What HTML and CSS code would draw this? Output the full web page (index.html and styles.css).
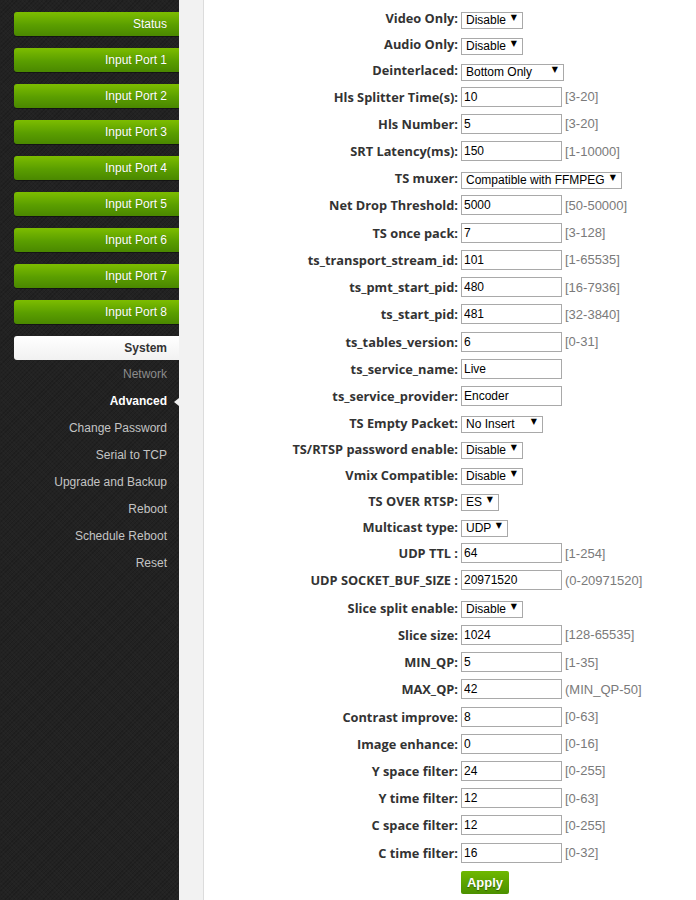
FILE: index.html
```html
<!DOCTYPE html>
<html>
<head>
<meta charset="utf-8">
<link rel="stylesheet" href="styles.css">
</head>
<body>
<div class="page">
  <nav class="sidebar">
    <a class="btn green">Status</a>
    <a class="btn green">Input Port 1</a>
    <a class="btn green">Input Port 2</a>
    <a class="btn green">Input Port 3</a>
    <a class="btn green">Input Port 4</a>
    <a class="btn green">Input Port 5</a>
    <a class="btn green">Input Port 6</a>
    <a class="btn green">Input Port 7</a>
    <a class="btn green">Input Port 8</a>
    <a class="btn white">System</a>
    <ul class="sub">
      <li class="dim">Network</li>
      <li class="active">Advanced</li>
      <li>Change Password</li>
      <li>Serial to TCP</li>
      <li>Upgrade and Backup</li>
      <li>Reboot</li>
      <li>Schedule Reboot</li>
      <li>Reset</li>
    </ul>
  </nav>
  <div class="strip"></div>
  <main class="main">
    <form class="form">
      <label class="s">Video Only:</label><div class="s"><span class="sel w62"><select><option>Disable</option></select></span></div>
      <label class="s">Audio Only:</label><div class="s"><span class="sel w62"><select><option>Disable</option></select></span></div>
      <label class="s">Deinterlaced:</label><div class="s"><span class="sel w103"><select><option>Bottom Only</option></select></span></div>
      <label>Hls Splitter Time(s):</label><div><input value="10"><span class="rng">[3-20]</span></div>
      <label>Hls Number:</label><div><input value="5"><span class="rng">[3-20]</span></div>
      <label>SRT Latency(ms):</label><div><input value="150"><span class="rng">[1-10000]</span></div>
      <label>TS muxer:</label><div><span class="sel w161"><select><option>Compatible with FFMPEG</option></select></span></div>
      <label>Net Drop Threshold:</label><div><input value="5000"><span class="rng">[50-50000]</span></div>
      <label>TS once pack:</label><div><input value="7"><span class="rng">[3-128]</span></div>
      <label>ts_transport_stream_id:</label><div><input value="101"><span class="rng">[1-65535]</span></div>
      <label>ts_pmt_start_pid:</label><div><input value="480"><span class="rng">[16-7936]</span></div>
      <label>ts_start_pid:</label><div><input value="481"><span class="rng">[32-3840]</span></div>
      <label>ts_tables_version:</label><div><input value="6"><span class="rng">[0-31]</span></div>
      <label>ts_service_name:</label><div><input value="Live"></div>
      <label>ts_service_provider:</label><div><input value="Encoder"></div>
      <label class="s">TS Empty Packet:</label><div class="s"><span class="sel w82"><select><option>No Insert</option></select></span></div>
      <label class="s">TS/RTSP password enable:</label><div class="s"><span class="sel w62"><select><option>Disable</option></select></span></div>
      <label class="s">Vmix Compatible:</label><div class="s"><span class="sel w62"><select><option>Disable</option></select></span></div>
      <label class="s">TS OVER RTSP:</label><div class="s"><span class="sel w38"><select><option>ES</option></select></span></div>
      <label class="s">Multicast type:</label><div class="s"><span class="sel w47"><select><option>UDP</option></select></span></div>
      <label>UDP TTL :</label><div><input value="64"><span class="rng">[1-254]</span></div>
      <label>UDP SOCKET_BUF_SIZE :</label><div><input value="20971520"><span class="rng">(0-20971520]</span></div>
      <label>Slice split enable:</label><div><span class="sel w62"><select><option>Disable</option></select></span></div>
      <label>Slice size:</label><div><input value="1024"><span class="rng">[128-65535]</span></div>
      <label>MIN_QP:</label><div><input value="5"><span class="rng">[1-35]</span></div>
      <label>MAX_QP:</label><div><input value="42"><span class="rng">(MIN_QP-50]</span></div>
      <label>Contrast improve:</label><div><input value="8"><span class="rng">[0-63]</span></div>
      <label>Image enhance:</label><div><input value="0"><span class="rng">[0-16]</span></div>
      <label>Y space filter:</label><div><input value="24"><span class="rng">[0-255]</span></div>
      <label>Y time filter:</label><div><input value="12"><span class="rng">[0-63]</span></div>
      <label>C space filter:</label><div><input value="12"><span class="rng">[0-255]</span></div>
      <label>C time filter:</label><div><input value="16"><span class="rng">[0-32]</span></div>
      <span></span><div class="apply-row"><button type="button" class="apply">Apply</button></div>
    </form>
  </main>
</div>
</body>
</html>
```
FILE: styles.css
```css
html, body {
  margin: 0;
  padding: 0;
  height: 100%;
  overflow: hidden;
  background: #fff;
}
.page {
  display: flex;
  min-height: 900px;
}
.sidebar {
  width: 179px;
  flex: none;
  background-color: #222;
  background-image:
    repeating-linear-gradient(45deg, rgba(255,255,255,0.015) 0 1px, transparent 1px 3px),
    repeating-linear-gradient(-45deg, rgba(0,0,0,0.15) 0 1px, transparent 1px 3px);
  padding-top: 12px;
  font-family: "Liberation Sans", Arial, sans-serif;
  font-size: 12px;
}
.btn {
  display: block;
  margin-left: 14px;
  height: 24px;
  line-height: 24px;
  margin-bottom: 12px;
  padding-right: 12px;
  text-align: right;
  border-radius: 3px 0 0 3px;
  box-sizing: border-box;
}
.btn.green {
  color: #fff;
  background: linear-gradient(#7dbd00, #5a9e00 55%, #4a8800);
  text-shadow: 0 0 1px rgba(0,0,0,0.25);
  box-shadow: 0 1px 0 rgba(0,0,0,0.4);
}
.btn.white {
  color: #333;
  font-weight: bold;
  background: linear-gradient(#ffffff, #f1f1f1);
  margin-bottom: 0;
}
.sub {
  list-style: none;
  margin: 0;
  padding: 1px 0 0;
}
.sub li {
  position: relative;
  height: 27px;
  line-height: 27px;
  text-align: right;
  padding-right: 12px;
  color: #c4c4c4;
}
.sub li.dim {
  color: #8c8c8c;
}
.sub li.active {
  color: #fff;
  font-weight: bold;
}
.sub li.active::after {
  content: "";
  position: absolute;
  right: 0;
  top: 10px;
  border-right: 5px solid #f2f2f2;
  border-top: 4px solid transparent;
  border-bottom: 4px solid transparent;
}
.strip {
  width: 24px;
  flex: none;
  background: #f2f2f2;
  border-right: 1px solid #dcdcdc;
}
.main {
  flex: 1;
  padding-top: 5px;
}
.form {
  display: grid;
  grid-template-columns: 254px 1fr;
  column-gap: 3px;
}
.form > label,
.form > div {
  height: 27.22px;
  display: flex;
  align-items: center;
}
.form > .s {
  height: 26px;
}
.form > label {
  justify-content: flex-end;
  font-family: "Open Sans", "DejaVu Sans", sans-serif;
  font-weight: bold;
  font-size: 12.8px;
  color: #333;
  white-space: nowrap;
}
input {
  width: 101px;
  height: 20px;
  box-sizing: border-box;
  border: 1px solid #a9a9a9;
  padding: 0 2px;
  margin: 0;
  font-family: "Liberation Sans", Arial, sans-serif;
  font-size: 12px;
  color: #000;
}
.rng {
  margin-left: 3px;
  font-family: "Liberation Sans", Arial, sans-serif;
  font-size: 13px;
  color: #7a7a7a;
}
.sel {
  position: relative;
  display: inline-block;
  height: 17px;
}
.sel select {
  appearance: none;
  -webkit-appearance: none;
  width: 100%;
  height: 17px;
  box-sizing: border-box;
  border: 1px solid #a9a9a9;
  border-radius: 0;
  background: #fff;
  padding: 0 0 0 4px;
  margin: 0;
  font-family: "Liberation Sans", Arial, sans-serif;
  font-size: 12px;
  color: #000;
  line-height: 15px;
}
.sel::after {
  content: "\25BC";
  position: absolute;
  right: 6px;
  top: 3px;
  font-size: 8px;
  line-height: 10px;
  color: #000;
  pointer-events: none;
  font-family: "DejaVu Sans", sans-serif;
}
.w38 { width: 38px; }
.w47 { width: 47px; }
.w62 { width: 62px; }
.w82 { width: 82px; }
.w103 { width: 103px; }
.w161 { width: 161px; }
.form > .apply-row {
  height: 27.5px;
  align-items: flex-end;
}
.apply {
  width: 48px;
  height: 23px;
  border: none;
  border-radius: 2px;
  background: linear-gradient(#6fb800, #4b9000);
  color: #fff;
  font-family: "Liberation Sans", Arial, sans-serif;
  font-weight: bold;
  font-size: 13px;
  text-shadow: 0 1px 1px rgba(0,0,0,0.4);
  padding: 0;
}
```
